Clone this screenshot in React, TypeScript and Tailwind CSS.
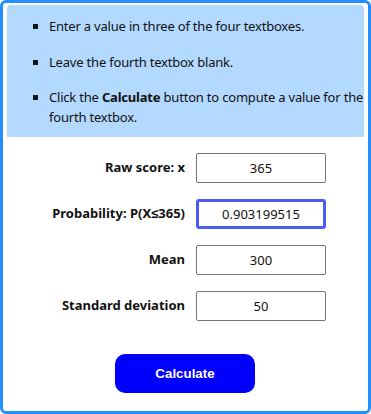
import React from "react";

const rows = [
  { label: "Raw score: x", value: "365", focused: false },
  { label: "Probability: P(X\u2264365)", value: "0.903199515", focused: true },
  { label: "Mean", value: "300", focused: false },
  { label: "Standard deviation", value: "50", focused: false },
];

export default function App() {
  return (
    <div
      className="w-[371px] h-[414px] bg-white border-[3px] border-[#2490ff] rounded-[6px] overflow-hidden text-[#111] text-[13px]"
      style={{ fontFamily: '"Noto Sans", sans-serif' }}
    >
      {/* instructions */}
      <div className="mx-[4px] mt-[2px] h-[132px] bg-[#b3d9ff] rounded-t-[4px] pt-[12px] pl-[42px]">
        <ul className="list-[square] flex flex-col gap-[16px] leading-[19.5px] tracking-[-0.2px]">
          <li>Enter a value in three of the four textboxes.</li>
          <li>Leave the fourth textbox blank.</li>
          <li>
            Click the <b>Calculate</b> button to compute a value for the fourth textbox.
          </li>
        </ul>
      </div>

      {/* form */}
      <div className="mt-[16px] flex flex-col gap-[16px]">
        {rows.map((r) => (
          <div key={r.label} className="flex items-center">
            <label className="w-[182px] text-right font-bold">{r.label}</label>
            <input
              readOnly
              value={r.value}
              className={
                r.focused
                  ? "ml-[11px] w-[130px] h-[30px] text-center text-[13px] rounded-[3px] border-[3px] border-[#4a5cf5] outline-none"
                  : "ml-[11px] w-[130px] h-[30px] text-center text-[13px] rounded-[2px] border border-[#767676] outline-none"
              }
            />
          </div>
        ))}
      </div>

      <div className="mt-[33px] flex">
        <button
          className="ml-[112px] w-[140px] h-[39px] rounded-[10px] bg-[#0000ff] text-white font-bold text-[13.333px]"
          style={{ fontFamily: '"Liberation Sans", Arial, sans-serif' }}
        >
          Calculate
        </button>
      </div>
    </div>
  );
}
